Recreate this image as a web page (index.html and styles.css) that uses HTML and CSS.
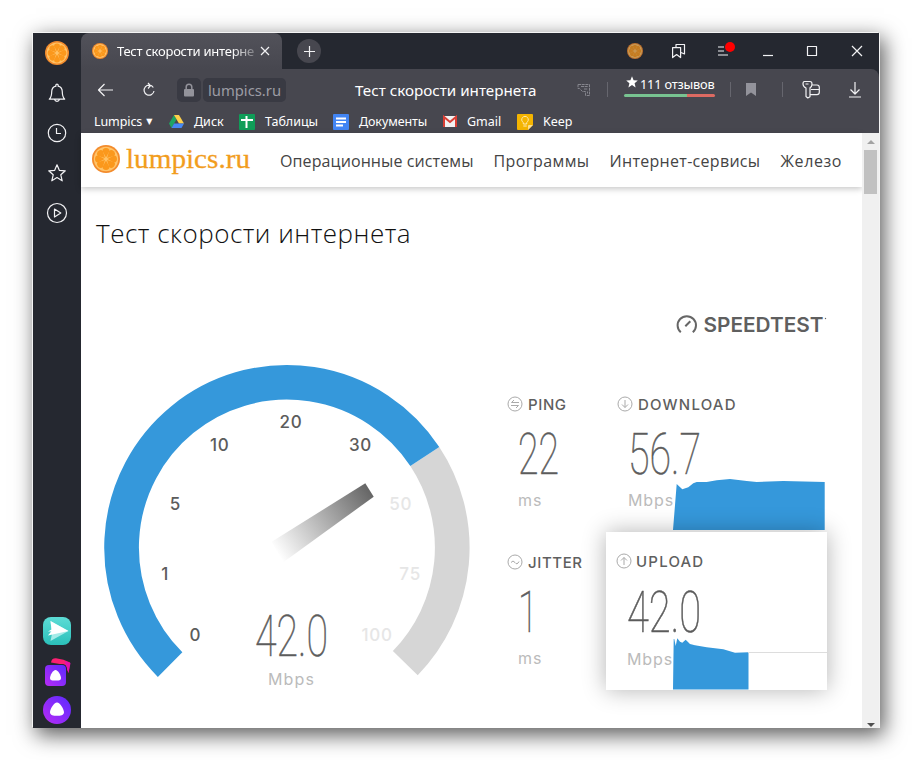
FILE: index.html
```html
<!DOCTYPE html>
<html lang="ru">
  <head>
    <meta charset="UTF-8">
    <title>Тест скорости интернета</title>
    <link rel="stylesheet" href="styles.css">
  </head>
  <body>
    <svg class="defs" width="0" height="0">
      <defs>
        <linearGradient id="teal" x1="0" y1="0" x2="0" y2="1">
          <stop offset="0" stop-color="#5ddcd6"/>
          <stop offset="1" stop-color="#2bc0ba"/>
        </linearGradient>
        <linearGradient id="violet" x1="1" y1="0" x2="0" y2="1">
          <stop offset="0" stop-color="#5a2bff"/>
          <stop offset="1" stop-color="#b92bf5"/>
        </linearGradient>
        <linearGradient id="needle" gradientUnits="userSpaceOnUse" x1="277" y1="553" x2="369" y2="490">
          <stop offset="0" stop-color="#666" stop-opacity="0"/>
          <stop offset="1" stop-color="#666"/>
        </linearGradient>
        <symbol id="orange" viewBox="0 0 28 28">
          <circle cx="14" cy="14" r="14" fill="#f38b2c"/>
          <circle cx="14" cy="14" r="12.200" fill="#ffc368"/>
          <g fill="#fb981c">
            <path id="seg" d="M14 12.600L10.600 6.200Q10.300 3.200 14 3 17.700 3.200 17.400 6.200z"/>
            <use href="#seg" transform="rotate(45 14 14)"/>
            <use href="#seg" transform="rotate(90 14 14)"/>
            <use href="#seg" transform="rotate(135 14 14)"/>
            <use href="#seg" transform="rotate(180 14 14)"/>
            <use href="#seg" transform="rotate(225 14 14)"/>
            <use href="#seg" transform="rotate(270 14 14)"/>
            <use href="#seg" transform="rotate(315 14 14)"/>
          </g>
        </symbol>
      </defs>
    </svg>

    <div class="window">
      <aside class="sidebar">
        <a class="side-item"><svg width="24" height="24"><use href="#orange"/></svg></a>
        <a class="side-item"><svg class="line" width="20" height="20" viewBox="0 0 20 20"><path d="M2.300 16.200c1.700-1.600 2.400-3.500 2.400-7.400 0-3.200 1.700-5.200 4.300-5.700a1.200 1.200 0 1 1 2 0c2.600.5 4.300 2.500 4.300 5.700 0 3.900.7 5.800 2.400 7.400zM7.500 16.400a2.600 2.600 0 0 0 5 0"/></svg></a>
        <a class="side-item"><svg class="line" width="20" height="20" viewBox="0 0 20 20"><circle cx="10" cy="10" r="8.700"/><path d="M9.500 5v5.500h4.500"/></svg></a>
        <a class="side-item"><svg class="line" width="20" height="20" viewBox="0 0 20 20"><path d="M10 1.800l2.300 5.500 6 .5-4.500 4 1.400 6-5.200-3.200-5.200 3.200 1.400-6-4.500-4 6-.5z"/></svg></a>
        <a class="side-item"><svg class="line" width="22" height="22" viewBox="0 0 22 22"><circle cx="11" cy="11" r="9.500"/><path d="M8.500 7l6.300 4-6.300 4z"/></svg></a>
        <div class="side-apps">
          <a class="side-item"><svg width="28" height="28" viewBox="0 0 28 28"><rect width="28" height="28" rx="8" fill="url(#teal)"/><path d="M7.500 4L25.500 14 7.500 24l1.500-7z" fill="#a5ebe8"/><path d="M7.500 4L25.500 14 5 14.500l3.500-2z" fill="#fff"/><path d="M5 18.500l3.500-4.500h17z" fill="#fff"/></svg></a>
          <a class="side-item"><svg width="28" height="30" viewBox="0 0 28 30"><path d="M8 5.500Q8.500 1 13 1.200 21 2 27 5.500L25.500 16l-3-8z" fill="#fb1f72"/><path d="M22 4l5.500 2-2 10-3-8z" fill="#e30fae"/><rect x="1" y="7" width="23" height="23" rx="5" fill="#252830"/><rect x="2" y="8" width="21" height="21" rx="4" fill="url(#violet)"/><path d="M12.500 13c-2.500 0-5.500 5.500-5.500 8s2.500 2.600 5.500 2.600S18 23.500 18 21s-3-8-5.500-8z" fill="#fff"/></svg></a>
          <a class="side-item side-item-last"><svg width="28" height="28" viewBox="0 0 28 28"><circle cx="14" cy="14" r="14" fill="url(#violet)"/><path d="M14 6.500c-3 0-7 6.800-7 9.700s3.500 3.600 7 3.600 7-.7 7-3.600-4-9.700-7-9.700z" fill="#fff"/></svg></a>
        </div>
      </aside>

      <div class="browser">
        <div class="tabbar">
          <div class="tab">
            <svg width="16" height="16"><use href="#orange"/></svg>
            <span class="tab-title">Тест скорости интерне</span>
            <svg class="line tab-close" width="8" height="8" viewBox="0 0 8 8"><path d="M0 0l8 8M8 0l-8 8"/></svg>
          </div>
          <div class="new-tab"><svg class="line" width="11" height="11" viewBox="0 0 11 11"><path d="M5.500 0v11M0 5.500h11"/></svg></div>
          <div class="controls">
            <svg class="dim" width="16" height="16"><use href="#orange"/></svg>
            <svg class="line" width="14" height="16" viewBox="0 0 14 16"><path d="M.6 4.600h8v10l-4-3-4 3zM4 4.600V1.500h8.500v9.500l-3.500-1.500"/></svg>
            <svg class="line menu-icon" width="18" height="18" viewBox="0 0 18 18"><path d="M1 5h6M1 9h6M1 13h10"/><circle cx="13" cy="5" r="5" fill="#f00" stroke="none"/></svg>
            <svg class="line" width="12" height="12" viewBox="0 0 12 12"><path d="M1 10.500h10"/></svg>
            <svg class="line" width="12" height="12" viewBox="0 0 12 12"><path d="M1.500 1.500h9v9h-9z"/></svg>
            <svg class="line" width="12" height="12" viewBox="0 0 12 12"><path d="M1 1l10 10M11 1l-10 10"/></svg>
          </div>
        </div>

        <div class="toolbar">
          <svg class="line back" width="16" height="14" viewBox="0 0 16 14"><path d="M7.500 1L1.500 7l6 6M1.500 7H16"/></svg>
          <svg class="line reload" width="14" height="16" viewBox="0 0 14 16"><path d="M11.300 5.500A5 5 0 1 0 12 9M6 1l2.500 2.700L6 6.500M8 3.700H6.500"/></svg>
          <span class="lock"><svg width="12" height="14" viewBox="0 0 12 14"><rect x="1" y="6" width="10" height="7.500" rx="1" fill="#93939b"/><path d="M3.200 6V4a2.800 2.800 0 0 1 5.600 0v2" fill="none" stroke="#93939b" stroke-width="1.500"/></svg></span>
          <span class="host">lumpics.ru</span>
          <span class="page-title">Тест скорости интернета</span>
          <svg class="tip" width="14" height="14" viewBox="0 0 14 14"><path d="M1 1.500h11.500v11h-4v-4h-3l-3-3H1zM4 3.500h7M7 6h4M10.500 8.500v2" fill="none" stroke="#85858d" stroke-dasharray="3 .7"/></svg>
          <i class="sep"></i>
          <div class="reviews">
            <span class="reviews-text"><svg width="12" height="12" viewBox="0 0 12 12"><path d="M6 .3l1.600 3.900 4.200.3-3.200 2.700 1 4.200L6 9.100l-3.600 2.300 1-4.200L.2 4.500l4.200-.3z" fill="#fff"/></svg>111 отзывов</span>
            <span class="reviews-bar"></span>
          </div>
          <i class="sep"></i>
          <svg class="flag" width="10" height="13" viewBox="0 0 10 13"><path d="M0 0h10v13L5 9.500 0 13z" fill="#93939b"/></svg>
          <i class="sep"></i>
          <svg class="line keys" width="18" height="19" viewBox="0 0 18 19"><path d="M2.500 1.500h5.500c1.500 0 2 1 2 2.500 0 2-.5 3-2 3.800v9L5.800 18 4 16.500V8C2 7 1 6 1 4c0-1.500.3-2.500 1.500-2.500zM3.500 4h3M10 5h5c1.500 0 2.300.8 2.300 2.300v5c0 1.500-.8 2.300-2.300 2.300H8M9 9.500h8.300"/></svg>
          <svg class="line download" width="12" height="16" viewBox="0 0 12 16"><path d="M6 0v12M1.500 7.500L6 12l4.500-4.500M0 15h12"/></svg>
        </div>

        <div class="bookmarks">
          <span class="bm-text bm-lumpics">Lumpics <b>▼</b></span>
          <svg width="15" height="13" viewBox="0 0 15 13"><path d="M5 0L0 8.600 2.500 13l5-8.600z" fill="#1fa463"/><path d="M5 0h5l5 8.600h-5z" fill="#ffd04b"/><path d="M5 8.600h10L12.500 13h-10z" fill="#4688f4"/></svg>
          <span class="bm-text bm-drive">Диск</span>
          <svg width="16" height="16" viewBox="0 0 16 16"><rect width="16" height="16" rx="1" fill="#0f9d58"/><path d="M2 6h12M7.500 2v12" stroke="#fff" stroke-width="2"/></svg>
          <span class="bm-text bm-sheets">Таблицы</span>
          <svg width="16" height="16" viewBox="0 0 16 16"><rect width="16" height="16" rx="1" fill="#4285f4"/><path d="M3 4.500h10M3 8h10M3 11.500h7" stroke="#fff" stroke-width="1.800"/></svg>
          <span class="bm-text bm-docs">Документы</span>
          <svg width="14" height="11" viewBox="0 0 14 11"><path d="M0 0h14v11H0z" fill="#f2f2f2"/><path d="M1 11V1l6 5 6-5v10" fill="none" stroke="#d93f35" stroke-width="2"/></svg>
          <span class="bm-text bm-gmail">Gmail</span>
          <svg width="16" height="16" viewBox="0 0 16 16"><path d="M1 0h14q1 0 1 1v10l-5 5H1q-1 0-1-1V1q0-1 1-1z" fill="#f4b400"/><path d="M11 16v-4q0-1 1-1h4z" fill="#ffe08a"/><path d="M6.300 10V8.500a3.300 3.300 0 1 1 3.400 0V10zM6.300 12h3.400" fill="none" stroke="#ffe9b0"/></svg>
          <span class="bm-text">Keep</span>
        </div>

        <div class="viewport">
          <div class="page">
            <header class="site-header">
              <svg width="28" height="28"><use href="#orange"/></svg>
              <svg class="brand" width="126" height="36" viewBox="0 0 126 36"><text x="0" y="27" textLength="124" lengthAdjust="spacingAndGlyphs">lumpics.ru</text></svg>
              <nav class="menu">
                <a class="menu-os">Операционные системы</a>
                <a class="menu-apps">Программы</a>
                <a class="menu-web">Интернет-сервисы</a>
                <a class="menu-hw">Железо</a>
              </nav>
            </header>

            <main class="content">
              <h1>Тест скорости интернета</h1>

              <div class="speedtest">
                <svg class="logo" width="151" height="22" viewBox="0 0 151 22">
                  <path d="M4.800 18.300a9.200 9.200 0 1 1 12 0M9.300 12.300l5-5" fill="none" stroke="#666" stroke-width="2"/>
                  <text x="27.500" y="18" textLength="120" lengthAdjust="spacingAndGlyphs">SPEEDTEST</text>
                  <circle cx="149.500" cy="4.500" r=".7" fill="#666"/>
                </svg>

                <div class="panel">
                  <svg class="gauge" width="368" height="325" viewBox="103 365 368 325">
                    <path d="M424.800 456.500A165.300 165.300 0 0 1 405.300 663.100" fill="none" stroke="#d6d6d6" stroke-width="34.700"/>
                    <path d="M170.100 664.600A165.300 165.300 0 1 1 424.800 456.500" fill="none" stroke="#3598db" stroke-width="34.700"/>
                    <path d="M365.300 483.300l8.400 13.400-90.400 65.600-11.600-20.600z" fill="url(#needle)"/>
                    <g class="ticks">
                      <text x="195.500" y="641">0</text>
                      <text x="165.300" y="580">1</text>
                      <text x="175.300" y="510">5</text>
                      <text x="219.700" y="451">10</text>
                      <text x="291" y="428">20</text>
                      <text x="360.500" y="451">30</text>
                      <g class="off">
                        <text x="400.700" y="510">50</text>
                        <text x="410.200" y="580">75</text>
                        <text x="377.200" y="641">100</text>
                      </g>
                    </g>
                    <text class="digits" x="255" y="656" textLength="73" lengthAdjust="spacingAndGlyphs">42.0</text>
                    <text class="unit-text" x="268" y="685" textLength="46">Mbps</text>
                  </svg>

                  <div class="metrics">
                    <section class="metric">
                      <h2><svg width="16" height="16" viewBox="0 0 16 16"><circle cx="8" cy="8" r="7"/><path d="M12 6.500H4.500l2.500-2.500M4 9.500h7.500L9 12"/></svg>PING</h2>
                      <svg class="value" width="80" height="46"><text class="digits" x="0" y="43" textLength="41" lengthAdjust="spacingAndGlyphs">22</text></svg>
                      <p class="unit">ms</p>
                    </section>
                    <section class="metric metric-wide">
                      <h2 class="wide-label"><svg width="16" height="16" viewBox="0 0 16 16"><circle cx="8" cy="8" r="7"/><path d="M8 4v7.500M5 8.500l3 3 3-3"/></svg>DOWNLOAD</h2>
                      <svg class="value" width="80" height="46"><text class="digits" x="0" y="43" textLength="73" lengthAdjust="spacingAndGlyphs">56.7</text></svg>
                      <p class="unit">Mbps</p>
                      <svg class="chart" width="154" height="54"><path d="M0 54L3.700 8l5.600 5.300 6-2 5-4L23.700 6h10l10-1.700L57 3l16.700 2 10 1 26.600-1 41.400 1v48z"/></svg>
                    </section>
                    <section class="metric">
                      <h2><svg width="16" height="16" viewBox="0 0 16 16"><circle cx="8" cy="8" r="7"/><path d="M4 8.500q2-3 4 0t4-1"/></svg>JITTER</h2>
                      <svg class="value" width="80" height="46"><text class="digits" x="0" y="43" textLength="20" lengthAdjust="spacingAndGlyphs">1</text></svg>
                      <p class="unit">ms</p>
                    </section>
                    <section class="metric metric-wide active">
                      <h2 class="wide-label"><svg width="16" height="16" viewBox="0 0 16 16"><circle cx="8" cy="8" r="7"/><path d="M8 12V4.500M5 7.500l3-3 3 3"/></svg>UPLOAD</h2>
                      <svg class="value" width="80" height="46"><text class="digits" x="0" y="43" textLength="74" lengthAdjust="spacingAndGlyphs">42.0</text></svg>
                      <p class="unit">Mbps</p>
                      <svg class="chart" width="154" height="54"><path d="M0 53.500L.7 3h.6l1.400 7 1.600-7.700L7 5.700l2.300 1 3.400-3L17 8l5 1.300 11.700 2 16.600 2L62 16.700l13.500-.4v37.200z"/><path class="rule" d="M75 16.500h79"/></svg>
                    </section>
                  </div>
                </div>
              </div>
            </main>
          </div>

          <div class="scrollbar">
            <svg width="8" height="4"><path d="M0 4l4-4 4 4z" fill="#a3a3a3"/></svg>
            <span class="thumb"></span>
            <svg class="scroll-down" width="8" height="4"><path d="M0 0l4 4 4-4z" fill="#505050"/></svg>
          </div>
        </div>
      </div>
    </div>
  </body>
</html>
```

FILE: styles.css
```css
html {
  box-sizing: border-box;
}

*,
*:before,
*:after {
  box-sizing: inherit;
}

body {
  background: #fff;
  font-family: "Noto Sans", "Open Sans", sans-serif;
  height: 760px;
  margin: 0;
  overflow: hidden;
  padding: 33px 32px 32px 33px;
}

svg {
  display: block;
  flex-shrink: 0;
  overflow: visible;
}

.defs {
  position: absolute;
}

.line {
  fill: none;
  stroke: #f2f2f4;
  stroke-linejoin: round;
  stroke-width: 1.2;
}

.window {
  box-shadow:
    -1px -1px 0 #f4f4f4,
    1px 0 0 #f4f4f4,
    4px 6px 20px 1px rgba(0, 0, 0, 0.65);
  display: flex;
  height: 695px;
  width: 846px;
}

/* sidebar */
.sidebar {
  background: #252830;
  display: flex;
  flex-direction: column;
  width: 48px;
}

.side-item {
  align-items: center;
  display: flex;
  height: 40px;
  justify-content: center;
}

.side-apps {
  margin-top: auto;
}

.side-apps .side-item {
  height: 41px;
}

.side-apps .side-item-last {
  height: 36px;
}

.browser {
  background: #252830;
  display: flex;
  flex: 1;
  flex-direction: column;
  min-width: 0;
}

/* tabs */
.tabbar {
  display: flex;
  height: 36px;
}

.tab {
  align-items: center;
  background: linear-gradient(#52525a, #47474f);
  border-radius: 8px 8px 0 0;
  display: flex;
  padding-left: 11px;
  width: 201px;
}

.tab-title {
  color: #fff;
  font-size: 13px;
  letter-spacing: -0.25px;
  margin-left: 9px;
  mask-image: linear-gradient(to right, #000 115px, transparent 146px);
  white-space: nowrap;
  width: 139px;
}

.tab-close {
  margin-left: 5px;
}

.new-tab {
  align-items: center;
  align-self: center;
  background: #47474f;
  border-radius: 50%;
  display: flex;
  height: 24px;
  justify-content: center;
  margin-left: 15px;
  width: 24px;
}

.controls {
  align-items: center;
  display: grid;
  grid-template-columns: repeat(6, 44.4px);
  justify-items: center;
  margin-left: auto;
}

.menu-icon {
  margin-left: 4px;
}

.dim {
  opacity: 0.75;
}

/* address line */
.toolbar {
  align-items: center;
  background: #47474f;
  border-top-right-radius: 8px;
  display: flex;
  height: 41px;
}

.back {
  margin-left: 16px;
}

.reload {
  margin-left: 29px;
}

.lock,
.host {
  align-items: center;
  background: #393a43;
  border-radius: 5px;
  color: #9c9ca4;
  display: flex;
  height: 24px;
  justify-content: center;
}

.lock {
  margin-left: 21px;
  width: 24px;
}

.host {
  font-size: 14.8px;
  margin-left: 2px;
  width: 83px;
}

.page-title {
  color: #fff;
  font-size: 15.2px;
  margin-left: 69px;
  white-space: nowrap;
  width: 222px;
}

.sep {
  background: #66666e;
  height: 15px;
  width: 1px;
}

.tip {
  margin-right: 16px;
}

.reviews {
  margin: -7px 15px 0 16px;
  width: 91px;
}

.reviews-text {
  color: #fff;
  display: flex;
  font-size: 12.8px;
  gap: 2px;
  letter-spacing: -0.2px;
  line-height: 16px;
  padding-left: 2px;
  white-space: nowrap;
}

.reviews-bar {
  background: linear-gradient(to right, #78c391 63px, #dd6a62 63px);
  border-radius: 2px;
  display: block;
  height: 3px;
  margin-top: 2px;
}

.flag {
  margin: 0 26px 0 15px;
}

.keys {
  margin-left: 19px;
}

.download {
  margin-left: 29px;
}

/* bookmarks */
.bookmarks {
  align-items: center;
  background: #47474f;
  display: flex;
  height: 23px;
  padding-left: 13px;
}

.bm-text {
  color: #fff;
  font-size: 12.5px;
  margin-left: 10px;
  white-space: nowrap;
}

.bm-text b {
  font: 8px "DejaVu Sans", sans-serif;
  margin-left: 1px;
  vertical-align: 2px;
}

.bm-lumpics {
  letter-spacing: -0.1px;
  margin-left: 0;
  width: 75px;
}

.bm-drive {
  width: 45px;
}

.bm-sheets {
  width: 68px;
}

.bm-docs {
  letter-spacing: -0.1px;
  width: 84px;
}

.bm-gmail {
  width: 50px;
}

/* page */
.viewport {
  background: #fff;
  display: flex;
  flex: 1;
}

.page {
  flex: 1;
  min-width: 0;
}

.site-header {
  align-items: center;
  box-shadow: 0 2px 6px rgba(0, 0, 0, 0.22);
  display: flex;
  height: 54px;
  padding: 0 0 2px 11px;
}

.brand {
  font-family: "Liberation Serif", serif;
  font-size: 28px;
  fill: #f29d1d;
  margin-left: 6px;
  stroke: #f29d1d;
  stroke-width: 0.3;
}

.menu {
  color: #444;
  display: flex;
  font-family: "Open Sans", sans-serif;
  font-size: 16px;
  gap: 20px;
  margin: 4px 0 0 28px;
  white-space: nowrap;
}

.menu-os {
  letter-spacing: 0.1px;
  width: 193.5px;
}

.menu-apps {
  letter-spacing: 0.4px;
  width: 96px;
}

.menu-web {
  letter-spacing: 0.3px;
  width: 151px;
}

.menu-hw {
  letter-spacing: 0.6px;
}

.content {
  padding: 26px 35px 0 15px;
}

h1 {
  color: #111;
  font-family: "Open Sans", sans-serif;
  font-size: 26px;
  font-weight: 300;
  letter-spacing: 0.5px;
  line-height: 40px;
  margin: 0;
  white-space: nowrap;
}

.speedtest {
  font-family: Inter, sans-serif;
  padding-top: 61px;
}

.logo {
  fill: #5f5f5f;
  font-size: 19.7px;
  font-weight: 600;
  margin-left: auto;
}

.panel {
  display: flex;
  margin-top: 29px;
  padding-left: 7px;
}

.ticks {
  fill: #5c5c5c;
  font-size: 17px;
  font-weight: 500;
  letter-spacing: 0.8px;
  text-anchor: middle;
}

.off {
  fill: #e6e6e6;
}

.digits {
  fill: #5c5c5c;
  font-family: Roboto, sans-serif;
  font-size: 58px;
  font-weight: 100;
  stroke: #5c5c5c;
  stroke-width: 0.6;
}

.unit-text {
  fill: #bbb;
  font-size: 16px;
}

.metrics {
  display: grid;
  grid-template-columns: 99px 221px;
  grid-template-rows: 158px 158px;
  margin: 9px 0 0 36px;
}

.metric {
  position: relative;
}

.metric h2 {
  align-items: center;
  color: #5f5f5f;
  display: flex;
  font-size: 15px;
  font-weight: 500;
  gap: 5px;
  height: 20px;
  letter-spacing: 0.6px;
  margin: 20px 0 0;
}

.metric h2.wide-label {
  letter-spacing: 1.2px;
}

.metric h2 svg {
  fill: none;
  stroke: #aaa;
}

.value {
  margin: 17px 0 0 11px;
}

.unit {
  color: #bbb;
  font-size: 16px;
  letter-spacing: 0.9px;
  line-height: 20px;
  margin: 13px 0 0 11px;
}

.metric-wide {
  padding-left: 11px;
}

.active {
  background: #fff;
  box-shadow: 0 0 22px rgba(0, 0, 0, 0.3);
  padding-left: 10px;
}

.metric.active h2 {
  gap: 4px;
  margin-top: 19px;
}

.active .value {
  margin-top: 18px;
}

.active .unit {
  margin-top: 14px;
}

.chart {
  bottom: 2px;
  fill: #3598db;
  position: absolute;
  left: 67px;
}

.active .chart {
  bottom: 0;
}

.rule {
  stroke: #ddd;
}

.scrollbar {
  align-items: center;
  background: #f0f0f0;
  display: flex;
  flex-direction: column;
  padding: 7px 0 1px;
  width: 17px;
}

.thumb {
  background: #c1c1c1;
  height: 44px;
  margin-top: 6px;
  width: 13px;
}

.scroll-down {
  margin-top: auto;
}
```
